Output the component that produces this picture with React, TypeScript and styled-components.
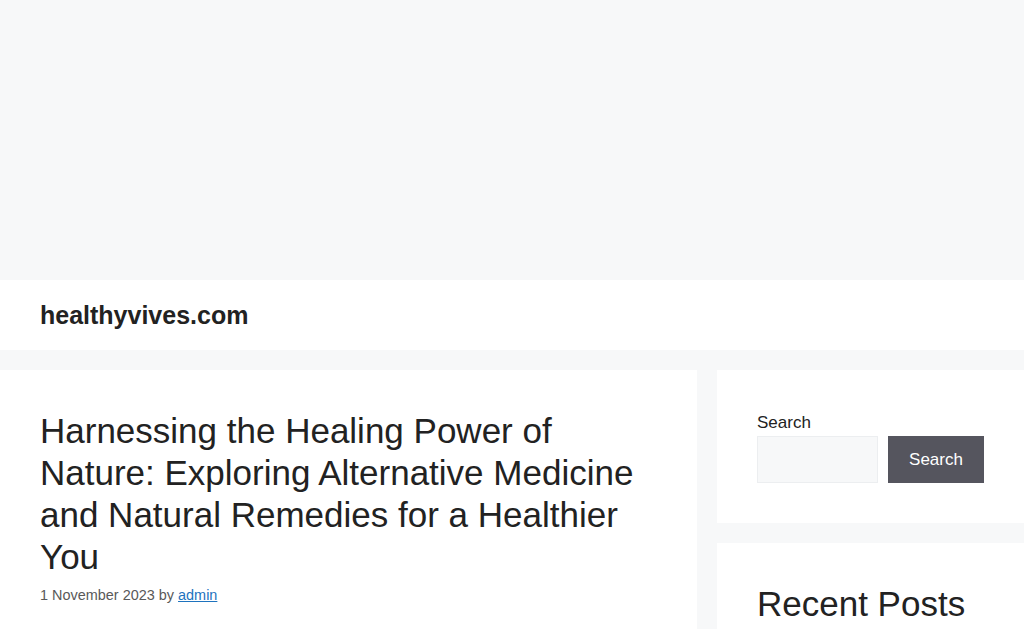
import React from "react";
import styled, { createGlobalStyle } from "styled-components";

const GlobalStyle = createGlobalStyle`
  html, body { margin: 0; padding: 0; }
  body {
    background: #f7f8f9;
    color: #222222;
    font-family: "Liberation Sans", Arial, sans-serif;
    font-size: 17px;
    line-height: 1.5;
  }
  * { box-sizing: border-box; }
`;

const AdSpace = styled.div`
  height: 280px;
`;

const Header = styled.header`
  background: #ffffff;
  height: 70px;
  padding: 0 40px;
  display: flex;
  align-items: center;
`;

const SiteTitle = styled.a`
  font-size: 25px;
  font-weight: 700;
  line-height: 1.2;
  color: #222222;
  text-decoration: none;
`;

const Layout = styled.div`
  display: grid;
  grid-template-columns: 697px 307px;
  column-gap: 20px;
  margin-top: 20px;
  align-items: start;
`;

const Article = styled.article`
  background: #ffffff;
  padding: 40px;
  min-height: 400px;
`;

const PostTitle = styled.h1`
  margin: 0;
  font-size: 35px;
  font-weight: 400;
  line-height: 1.2;
  color: #222222;
`;

const Meta = styled.div`
  margin-top: 7px;
  font-size: 14.45px;
  line-height: 1.5;
  color: #595959;
`;

const MetaLink = styled.a`
  color: #1e73be;
  text-decoration: underline;
`;

const Sidebar = styled.aside`
  display: flex;
  flex-direction: column;
  gap: 20px;
`;

const Widget = styled.section`
  background: #ffffff;
  padding: 40px;
  min-height: ${(p: { $tall?: boolean }) => (p.$tall ? "200px" : "0")};
`;

const Label = styled.label`
  display: block;
  font-size: 17px;
  line-height: 26px;
  color: #222222;
`;

const SearchRow = styled.div`
  display: flex;
  gap: 10px;
`;

const SearchInput = styled.input`
  width: 121px;
  height: 47px;
  background: #f7f8f9;
  border: 1px solid #eceef0;
  padding: 10px 15px;
  font-family: inherit;
  font-size: 17px;
  color: #666;
  outline: none;
`;

const SearchButton = styled.button`
  width: 96px;
  height: 47px;
  background: #55555e;
  color: #ffffff;
  border: none;
  font-family: inherit;
  font-size: 17px;
  line-height: 1.5;
  padding: 10px 20px;
  cursor: pointer;
`;

const WidgetTitle = styled.h2`
  margin: 0;
  font-size: 35px;
  font-weight: 400;
  line-height: 1.2;
  color: #222222;
`;

export default function App() {
  return (
    <>
      <GlobalStyle />
      <AdSpace />
      <Header>
        <SiteTitle href="#">healthyvives.com</SiteTitle>
      </Header>
      <Layout>
        <Article>
          <PostTitle>
            Harnessing the Healing Power of Nature: Exploring Alternative Medicine and Natural
            Remedies for a Healthier You
          </PostTitle>
          <Meta>
            1 November 2023 by <MetaLink href="#">admin</MetaLink>
          </Meta>
        </Article>
        <Sidebar>
          <Widget>
            <Label htmlFor="s">Search</Label>
            <SearchRow>
              <SearchInput id="s" type="search" />
              <SearchButton type="button">Search</SearchButton>
            </SearchRow>
          </Widget>
          <Widget $tall>
            <WidgetTitle>Recent Posts</WidgetTitle>
          </Widget>
        </Sidebar>
      </Layout>
    </>
  );
}
